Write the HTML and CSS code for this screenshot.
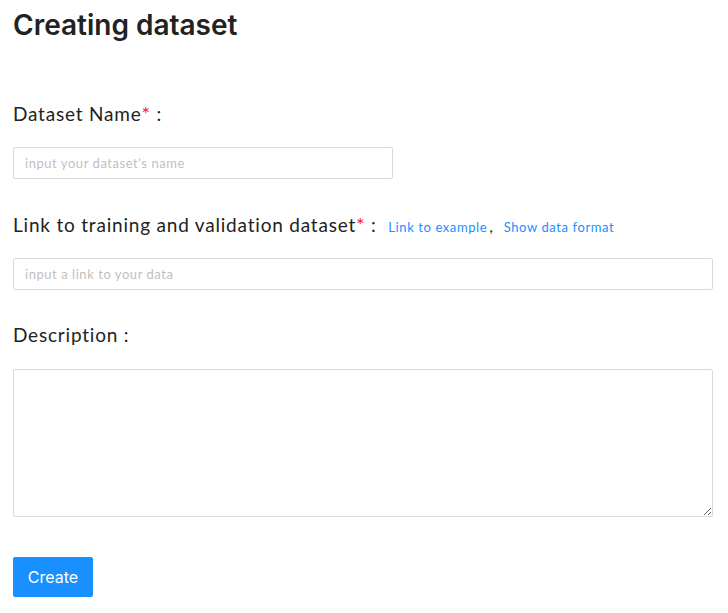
FILE: index.html
```html
<!DOCTYPE html>
<html>
<head>
<meta charset="utf-8">
<link rel="stylesheet" href="styles.css">
</head>
<body>
<div class="page">
  <h1 class="title">Creating dataset</h1>
  <form class="form">
    <div class="item">
      <div class="label">Dataset Name<span class="req">*</span> :</div>
      <input class="input input-short" type="text" placeholder="input your dataset's name">
    </div>
    <div class="item">
      <div class="label">Link to training and validation dataset<span class="req">*</span> : <a class="link" href="#">Link to example</a><span class="comma">,</span><a class="link" href="#">Show data format</a></div>
      <input class="input" type="text" placeholder="input a link to your data">
    </div>
    <div class="item">
      <div class="label">Description :</div>
      <textarea class="textarea"></textarea>
    </div>
    <button class="btn" type="button">Create</button>
  </form>
</div>
</body>
</html>
```
FILE: styles.css
```css
* { box-sizing: border-box; }
body { margin: 0; background: #fff; font-family: "Lato", "Noto Sans", sans-serif; color: rgba(0,0,0,0.85); }
.page { padding: 8px 16px 0 13px; width: 728px; }
.title { margin: 0; font-family: "Inter", "Liberation Sans", sans-serif; font-weight: 600; font-size: 28px; line-height: 34px; color: #222; letter-spacing: 0; }
.form { margin-top: 55px; display: flex; flex-direction: column; }
.item { display: flex; flex-direction: column; align-items: flex-start; margin-bottom: 29px; }
.label { height: 32px; line-height: 32px; font-size: 19px; letter-spacing: 0.8px; color: #222; margin-bottom: 18px; white-space: nowrap; }
.req { color: #f5222d; font-size: 20px; }
.link { font-size: 13px; letter-spacing: 0.6px; color: #1890ff; text-decoration: none; margin-left: 6px; }
.comma { font-size: 16px; margin: 0 10px 0 2px; }
.comma + .link { margin-left: 0; }
.input { width: 700px; height: 32px; border: 1px solid #d9d9d9; border-radius: 2px; padding: 4px 11px; font-family: "Lato", sans-serif; font-size: 13px; letter-spacing: 0.55px; color: #333; outline: none; }
.input-short { width: 380px; }
.input::placeholder { color: #bfbfbf; }
.textarea { width: 700px; height: 148px; border: 1px solid #d9d9d9; border-radius: 2px; padding: 4px 11px; font-family: "Lato", sans-serif; font-size: 13px; outline: none; resize: both; }
.btn { margin-top: 11px; width: 80px; height: 40px; background: #1890ff; border: 1px solid #1890ff; border-radius: 2px; color: #fff; font-family: "Inter", "Liberation Sans", sans-serif; font-size: 16px; padding: 0; cursor: pointer; }
```
